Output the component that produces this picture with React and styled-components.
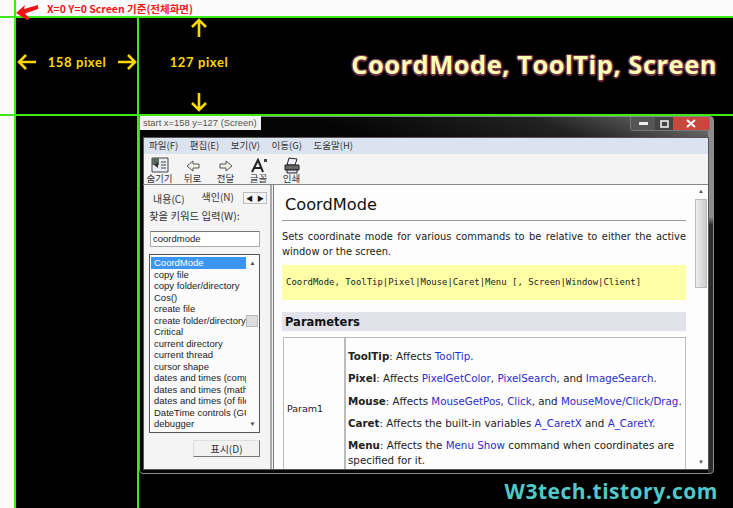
import { createGlobalStyle, styled } from "styled-components"

const GlobalStyle = createGlobalStyle`
  html, body { margin: 0; padding: 0; background: #000; }
  body { font-family: "Liberation Sans", Arial, sans-serif; overflow: hidden; }
  * { box-sizing: border-box; }
`
const KR = `"Noto Sans CJK KR", "Liberation Sans", sans-serif`
const GREEN = "#3dea12"

const Sheet = styled.div`
  width: 733px;
  height: 508px;
  background: #000;
  overflow: hidden;
  display: grid;
  grid-template-columns: 14px 2px 121px 2px 1fr;
  grid-template-rows: 16px 2px 96px 2px 1fr;
`
const Banner = styled.div`
  grid-column: 3 / 6;
  grid-row: 1;
  background: #fbfbfb;
  display: flex;
  align-items: center;
  gap: 8px;
  color: #f01818;
  font: 700 10.5px ${KR};
  padding: 0 0 0 0;
  z-index: 2;
`
const Strip = styled.div`
  grid-column: 1;
  grid-row: 1 / 6;
  background: #fbfbfb;
`
const TopNotch = styled.div`
  grid-column: 2;
  grid-row: 1;
  background: ${GREEN};
`
const VLine = styled.div`
  grid-column: ${p => p.$col};
  grid-row: ${p => p.$from} / 6;
  background: ${GREEN};
`
const HLine = styled.div`
  grid-column: 1 / 6;
  grid-row: ${p => p.$row};
  background: ${GREEN};
  z-index: 1;
`
const Measure = styled.div`
  grid-column: 3;
  grid-row: 3;
  display: flex;
  align-items: center;
  justify-content: space-between;
  padding: 0 0 8px 1px;
`
const YellowLabel = styled.span`
  color: #ffd800;
  font: 700 13px "Lato", sans-serif;
  letter-spacing: .6px;
  white-space: nowrap;
  margin-bottom: ${p => p.$lift || 0}px;
`
const TopRight = styled.div`
  grid-column: 5;
  grid-row: 3;
  display: flex;
  align-items: stretch;
`
const HeightMeasure = styled.div`
  width: 120px;
  display: flex;
  flex-direction: column;
  align-items: center;
  justify-content: space-between;
  padding: 0 0 2px 0;
`
const Title = styled.div`
  flex: 1;
  display: flex;
  align-items: center;
  justify-content: flex-end;
  padding: 0 16px 4px 0;
  color: #ffffb4;
  font: 700 25.5px "Open Sans", sans-serif;
  white-space: nowrap;
  letter-spacing: .5px;
  text-shadow: -1.5px 0 #70304a, 1.5px 0 #70304a, 0 -1.5px #70304a, 0 1.5px #70304a,
    -1px -1px #70304a, 1px 1px #70304a, -1px 1px #70304a, 1px -1px #70304a;
`
const Lower = styled.div`
  grid-column: 5;
  grid-row: 5;
  position: relative;
  display: flex;
  flex-direction: column;
  min-height: 0;
`
const Tip = styled.div`
  position: absolute;
  left: 1px;
  top: 0;
  width: 121px;
  height: 14px;
  background: #f2f2f2;
  color: #555;
  font: 9.4px/14px "Liberation Sans", sans-serif;
  padding-left: 3px;
  white-space: nowrap;
  z-index: 3;
`
const Win = styled.div`
  margin-right: 19px;
  height: 358px;
  flex: none;
  border: 1px solid #8a8a8a;
  border-radius: 0 4px 4px 4px;
  background:
    linear-gradient(180deg, #8c8c8c 0, #8c8c8c 100px, #2c2c2c 108px) no-repeat right / 5px 100%,
    linear-gradient(200deg, #7a7a7a 0%, #222 12%, #050505 26%, #050505 100%);
  padding: 0 4px 3px 3px;
  display: flex;
  flex-direction: column;
`
const TitleBar = styled.div`
  height: 20px;
  flex: none;
  display: flex;
  justify-content: flex-end;
`
const WinControls = styled.div`
  display: flex;
  height: 14px;
  width: 80px;
  margin-right: -1px;
  border: 1px solid #777;
  border-top: none;
  border-radius: 0 0 3px 3px;
  overflow: hidden;
`
const WinBtn = styled.div`
  width: ${p => p.$w}px;
  background: ${p => p.$bg};
  display: flex;
  align-items: center;
  justify-content: center;
`
const Client = styled.div`
  flex: 1;
  min-height: 0;
  background: #f4f4f4;
  display: flex;
  flex-direction: column;
  border: 1px solid #555;
`
const MenuBar = styled.div`
  height: 16px;
  flex: none;
  background: #dbe3f1;
  display: flex;
  align-items: center;
  gap: 11.5px;
  padding: 0 0 2px 5px;
  font: 9.5px ${KR};
  color: #333;
`
const ToolBar = styled.div`
  height: 31px;
  flex: none;
  display: flex;
  align-items: flex-start;
  border-bottom: 1px solid #888;
  padding: 3px 0 0 0;
  margin-left: -1px;
`
const Tool = styled.div`
  width: 33px;
  display: flex;
  flex-direction: column;
  align-items: center;
  font: 9.5px/10px ${KR};
  color: #333;
  svg { display: block; margin-bottom: -1px; }
`
const Panes = styled.div`
  flex: 1;
  min-height: 0;
  display: flex;
`
const Side = styled.div`
  width: 128px;
  flex: none;
  padding: 0 10px 0 5px;
  border-right: 2px solid #aaa;
  display: flex;
  flex-direction: column;
`
const Tabs = styled.div`
  height: 23px;
  display: flex;
  align-items: center;
  font: 10px ${KR};
  color: #333;
  white-space: nowrap;
  padding-left: 4px;
  margin-right: -7px;
`
const TabActive = styled.span`
  margin: 3px 17px 0 0;
`
const TabArrows = styled.div`
  display: flex;
  flex: none;
  margin-left: auto;
  border: 1px solid #bbb;
  font-size: 7px;
  line-height: 10px;
  margin-top: 3px;
`
const TabArrow = styled.span`
  width: 11px;
  text-align: center;
  color: #111;
`
const FieldLabel = styled.div`
  font: 10.4px/14px ${KR};
  color: #333;
  margin-top: 1px;
  white-space: nowrap;
`
const Field = styled.div`
  margin-top: 8px;
  margin-left: 1px;
  height: 16px;
  border: 1px solid #aaa;
  border-top-color: #777;
  background: #fff;
  font: 9.5px/14px "Liberation Sans", sans-serif;
  padding-left: 2px;
  color: #222;
`
const ListBox = styled.div`
  margin-top: 7px;
  height: 179px;
  flex: none;
  border: 1px solid #555;
  background: #fbfbfb;
  display: flex;
  overflow: hidden;
  padding: 2px 0 0 1px;
`
const Items = styled.div`
  flex: 1;
  min-width: 0;
  overflow: hidden;
`
const Item = styled.div`
  height: 11.5px;
  font: 9.5px/11.5px "Liberation Sans", sans-serif;
  padding-left: 3px;
  white-space: nowrap;
  color: ${p => (p.$on ? "#fff" : "#222")};
  background: ${p => (p.$on ? "#3a96f0" : "transparent")};
`
const ListBar = styled.div`
  width: 13px;
  flex: none;
  display: flex;
  flex-direction: column;
  align-items: center;
  justify-content: space-between;
  font-size: 6px;
  color: #444;
  padding: 3px 0 5px;
  position: relative;
`
const ListThumb = styled.div`
  position: absolute;
  top: 58px;
  left: 0;
  width: 12px;
  height: 12px;
  background: #ddd;
  border: 1px solid #bbb;
`
const ShowRow = styled.div`
  margin-top: 7px;
  display: flex;
  justify-content: flex-end;
`
const ShowBtn = styled.div`
  width: 67px;
  height: 17px;
  background: #f2f2f2;
  border: 1px solid #ddd;
  border-right-color: #777;
  border-bottom-color: #777;
  font: 10px/15px ${KR};
  text-align: center;
  color: #333;
`
const Doc = styled.div`
  flex: 1;
  min-width: 0;
  margin-left: 1px;
  background: #fdfdfd;
  border-left: 1px solid #777;
  display: flex;
  overflow: hidden;
`
const DocBody = styled.div`
  width: 420px;
  flex: none;
  padding: 0 8px 0 8px;
  color: #222;
  font: 10.3px/15px "DejaVu Sans", sans-serif;
`
const H1 = styled.h1`
  margin: 0;
  height: 36px;
  font: 400 16.2px/39px "DejaVu Sans", sans-serif;
  padding-left: 3px;
  color: #111;
  border-bottom: 1px solid #999;
`
const Lead = styled.div`
  margin: 8px 0 0;
  height: 30px;
  font-size: 9.9px;
`
const LeadLine = styled.div`
  white-space: nowrap;
  text-align: justify;
  text-align-last: ${p => (p.$full ? "justify" : "left")};
`
const Syntax = styled.pre`
  margin: 6px 0 0;
  height: 35px;
  background: #ffffa8;
  padding: 0 4px;
  font: 8.95px/35px "DejaVu Sans Mono", monospace;
  color: #222;
  overflow: hidden;
`
const H2 = styled.h2`
  margin: 12px 0 0;
  height: 19px;
  background: #e2e2ea;
  font: 700 11.5px/21px "DejaVu Sans", sans-serif;
  padding-left: 3px;
  color: #111;
`
const Table = styled.div`
  margin-top: 6px;
  margin-left: 1px;
  height: 150px;
  display: grid;
  grid-template-columns: 62px 1fr;
  border: 1px solid #bbb;
  border-bottom: none;
`
const ParamName = styled.div`
  border-right: 2px solid #bbb;
  padding: 63px 0 0 3px;
  font-size: 9.5px;
`
const ParamText = styled.div`
  padding: 11px 0 0 2px;
  font-size: 10.3px;
  white-space: nowrap;
`
const ParamLine = styled.p`
  margin: 0 0 7.3px;
`
const Link = styled.span`
  color: #2c2ccc;
`
const DocBar = styled.div`
  flex: 1;
  position: relative;
  display: flex;
  flex-direction: column;
  align-items: center;
  justify-content: space-between;
  padding: 3px 0 4px;
  font-size: 6px;
  color: #555;
`
const DocThumb = styled.div`
  position: absolute;
  left: 1px;
  top: 14px;
  width: 12px;
  height: 89px;
  background: linear-gradient(90deg, #eee, #ccc);
  border: 1px solid #bbb;
`
const Footer = styled.div`
  flex: 1;
  display: flex;
  justify-content: flex-end;
  align-items: center;
  padding: 0 15px 0 0;
  color: #52c8c8;
  font: 700 21px "Open Sans", sans-serif;
  letter-spacing: .5px;
`

const Arrow = ({ dir, size = 20 }) => {
  const rot = { right: 0, left: 180, up: 270, down: 90 }[dir]
  return (
    <svg width={size} height={size} viewBox="0 0 20 20" style={{ transform: `rotate(${rot}deg)` }}>
      <path d="M1 10H18M11 3l7 7-7 7" fill="none" stroke="#ffd800" strokeWidth="2.6" />
    </svg>
  )
}

const RedArrow = () => (
  <svg width="23" height="18" viewBox="0 0 23 18" style={{ marginTop: "10px", flex: "none", overflow: "visible" }}>
    <path d="M0 9L9 1 8 5 22 1 22 5 9 9.5 14 15 11 16z" fill="#ee1414" />
  </svg>
)

const HideIcon = () => (
  <svg width="18" height="17" viewBox="0 0 18 17">
    <path d="M1 1h16v14H1z" fill="#e8ecf0" stroke="#444" />
    <path d="M1 1h7v7H1z" fill="#5a6a60" />
    <path d="M7 5L3 8l4 3z" fill="#333" />
    <path d="M10 5h5M10 8h5M10 11h5" stroke="#445" />
  </svg>
)
const BackIcon = () => (
  <svg width="18" height="17" viewBox="0 0 18 17">
    <path d="M9 4L3 9l6 5v-3h6V7H9z" fill="#f0f0ea" stroke="#555" />
  </svg>
)
const ForwardIcon = () => (
  <svg width="18" height="17" viewBox="0 0 18 17">
    <path d="M9 4l6 5-6 5v-3H3V7h6z" fill="#f0f0ea" stroke="#555" />
  </svg>
)
const FontIcon = () => (
  <svg width="18" height="17" viewBox="0 0 18 17">
    <path d="M2 15L8 3l5 12M4.5 11h6" fill="none" stroke="#222" strokeWidth="2" />
    <path d="M14 2h3v3h-3z" fill="#444" />
  </svg>
)
const PrintIcon = () => (
  <svg width="18" height="17" viewBox="0 0 18 17">
    <path d="M6 1l8 1-2 6H4z" fill="#eef" stroke="#222" />
    <path d="M2 8h14v5H2z" fill="#666" stroke="#222" />
    <path d="M4 13h10v3H4z" fill="#dde" stroke="#222" />
  </svg>
)

const tools = [
  ["숨기기", HideIcon],
  ["뒤로", BackIcon],
  ["전달", ForwardIcon],
  ["글꼴", FontIcon],
  ["인쇄", PrintIcon],
]
const menus = ["파일(F)", "편집(E)", "보기(V)", "이동(G)", "도움말(H)"]
const entries = [
  "CoordMode", "copy file", "copy folder/directory", "Cos()", "create file",
  "create folder/directory", "Critical", "current directory", "current thread",
  "cursor shape", "dates and times (compare)", "dates and times (math)",
  "dates and times (of files)", "DateTime controls (GUI)", "debugger",
]

export default function App() {
  return (
    <Sheet>
      <GlobalStyle />
      <Strip />
      <TopNotch />
      <Banner>
        <RedArrow />
        <span>X=0 Y=0 Screen 기준(전체화면)</span>
      </Banner>
      <HLine $row={2} />
      <VLine $col={2} $from={2} />
      <VLine $col={4} $from={3} />
      <Measure>
        <Arrow dir="left" />
        <YellowLabel>158 pixel</YellowLabel>
        <Arrow dir="right" />
      </Measure>
      <TopRight>
        <HeightMeasure>
          <Arrow dir="up" />
          <YellowLabel $lift={6}>127 pixel</YellowLabel>
          <Arrow dir="down" />
        </HeightMeasure>
        <Title>CoordMode, ToolTip, Screen</Title>
      </TopRight>
      <HLine $row={4} />
      <Lower>
        <Tip>start x=158 y=127 (Screen)</Tip>
        <Win>
          <TitleBar>
            <WinControls>
              <WinBtn $w={25} $bg="#555">
                <svg width="9" height="3"><rect width="9" height="3" fill="#eee" /></svg>
              </WinBtn>
              <WinBtn $w={18} $bg="#444">
                <svg width="9" height="8"><rect x="1" y="1" width="7" height="6" fill="none" stroke="#eee" strokeWidth="1.6" /></svg>
              </WinBtn>
              <WinBtn $w={37} $bg="#c8483e">
                <svg width="10" height="9"><path d="M1 1l8 7M9 1L1 8" stroke="#fff" strokeWidth="2" /></svg>
              </WinBtn>
            </WinControls>
          </TitleBar>
          <Client>
            <MenuBar>
              {menus.map(m => <span key={m}>{m}</span>)}
            </MenuBar>
            <ToolBar>
              {tools.map(([name, ToolIcon]) => (
                <Tool key={name}>
                  <ToolIcon />
                  {name}
                </Tool>
              ))}
            </ToolBar>
            <Panes>
              <Side>
                <Tabs>
                  <TabActive>내용(C)</TabActive>
                  <span>색인(N)</span>
                  <TabArrows>
                    <TabArrow>◀</TabArrow>
                    <TabArrow>▶</TabArrow>
                  </TabArrows>
                </Tabs>
                <FieldLabel>찾을 키워드 입력(W):</FieldLabel>
                <Field>coordmode</Field>
                <ListBox>
                  <Items>
                    {entries.map((e, i) => <Item key={e} $on={i === 0}>{e}</Item>)}
                  </Items>
                  <ListBar>
                    <span>▲</span>
                    <ListThumb />
                    <span>▼</span>
                  </ListBar>
                </ListBox>
                <ShowRow>
                  <ShowBtn>표시(D)</ShowBtn>
                </ShowRow>
              </Side>
              <Doc>
                <DocBody>
                  <H1>CoordMode</H1>
                  <Lead>
                    <LeadLine $full>Sets coordinate mode for various commands to be relative to either the active</LeadLine>
                    <LeadLine>window or the screen.</LeadLine>
                  </Lead>
                  <Syntax>CoordMode, ToolTip|Pixel|Mouse|Caret|Menu [, Screen|Window|Client]</Syntax>
                  <H2>Parameters</H2>
                  <Table>
                    <ParamName>Param1</ParamName>
                    <ParamText>
                      <ParamLine><b>ToolTip</b>: Affects <Link>ToolTip</Link>.</ParamLine>
                      <ParamLine><b>Pixel</b>: Affects <Link>PixelGetColor</Link>, <Link>PixelSearch</Link>, and <Link>ImageSearch</Link>.</ParamLine>
                      <ParamLine><b>Mouse</b>: Affects <Link>MouseGetPos</Link>, <Link>Click</Link>, and <Link>MouseMove/Click/Drag</Link>.</ParamLine>
                      <ParamLine><b>Caret</b>: Affects the built-in variables <Link>A_CaretX</Link> and <Link>A_CaretY</Link>.</ParamLine>
                      <ParamLine><b>Menu</b>: Affects the <Link>Menu Show</Link> command when coordinates are<br />specified for it.</ParamLine>
                    </ParamText>
                  </Table>
                </DocBody>
                <DocBar>
                  <span>▲</span>
                  <DocThumb />
                  <span>▼</span>
                </DocBar>
              </Doc>
            </Panes>
          </Client>
        </Win>
        <Footer>W3tech.tistory.com</Footer>
      </Lower>
    </Sheet>
  )
}
